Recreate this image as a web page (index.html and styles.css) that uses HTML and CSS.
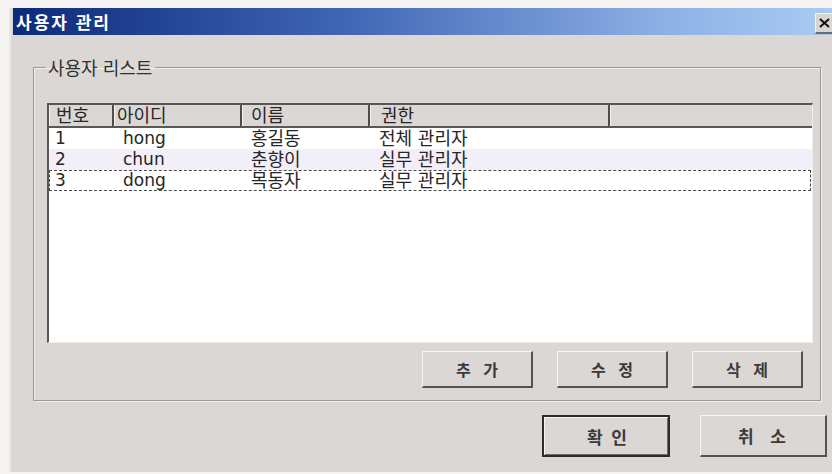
FILE: index.html
```html
<!DOCTYPE html>
<html lang="ko">
<head>
<meta charset="utf-8">
<title>사용자 관리</title>
<link rel="stylesheet" href="styles.css">
</head>
<body>
<div class="dialog">
  <div class="titlebar">
    <span class="title">사용자 관리</span>
    <button class="close" type="button" aria-label="닫기">
      <svg width="11" height="10" viewBox="0 0 11 10"><path d="M1 1 L10 9 M10 1 L1 9" stroke="#111" stroke-width="2"/></svg>
    </button>
  </div>
  <div class="body">
    <fieldset class="group">
      <legend>사용자 리스트</legend>
      <div class="listview">
        <div class="lv-row lv-head">
          <div class="c c1">번호</div>
          <div class="c c2">아이디</div>
          <div class="c c3">이름</div>
          <div class="c c4">권한</div>
          <div class="c c5"></div>
        </div>
        <div class="lv-row item">
          <div class="c c1">1</div>
          <div class="c c2">hong</div>
          <div class="c c3">홍길동</div>
          <div class="c c4">전체 관리자</div>
        </div>
        <div class="lv-row item alt">
          <div class="c c1">2</div>
          <div class="c c2">chun</div>
          <div class="c c3">춘향이</div>
          <div class="c c4">실무 관리자</div>
        </div>
        <div class="lv-row item focus">
          <div class="c c1">3</div>
          <div class="c c2">dong</div>
          <div class="c c3">목동자</div>
          <div class="c c4">실무 관리자</div>
        </div>
      </div>
      <div class="actions">
        <button class="btn" type="button">추 가</button>
        <button class="btn" type="button">수 정</button>
        <button class="btn" type="button">삭 제</button>
      </div>
    </fieldset>
    <div class="footer">
      <button class="btn btn-default" type="button">확 인</button>
      <button class="btn btn-cancel" type="button">취 소</button>
    </div>
  </div>
</div>
</body>
</html>
```

FILE: styles.css
```css
* { box-sizing: border-box; }

html, body {
  margin: 0;
  background: #f5f4f3;
}

body {
  padding: 8px 0 0 9px;
  font-family: "DejaVu Sans", "Noto Sans CJK KR", sans-serif;
  color: #262626;
}

.dialog {
  width: 823px;
  height: 464px;
  background: #dbd7d4;
  border-left: 2px solid #ebe9e7;
  padding-left: 2px;
}

/* caption bar */
.titlebar {
  height: 27px;
  background: linear-gradient(to right, #0d2a7a 0%, #3f65b4 40%, #8eb1e6 80%, #a9cbf2 100%);
  display: flex;
  align-items: center;
  justify-content: space-between;
}

.title {
  font-family: "Noto Sans CJK KR", sans-serif;
  font-size: 17px;
  font-weight: 700;
  color: #ffffff;
  padding-left: 3px;
  letter-spacing: 2px;
}

.close {
  width: 17px;
  height: 21px;
  margin-top: 4px;
  padding: 0;
  background: #d9d5d2;
  border: none;
  border-top: 1px solid #f4f2f0;
  border-left: 1px solid #f4f2f0;
  border-bottom: 2px solid #6e6b69;
  display: flex;
  align-items: center;
  justify-content: center;
}

.body {
  padding: 22px 0 0 20px;
}

/* group box */
.group {
  margin: 0;
  width: 788px;
  height: 344px;
  border: 1px solid #9c9896;
  box-shadow: inset 1px 1px 0 #f2f0ee, 1px 1px 0 #f2f0ee;
  padding: 0 7px 0 13px;
}

.group legend {
  font-family: "Noto Sans CJK KR", sans-serif;
  font-size: 18px;
  line-height: 20px;
  padding: 0 3px 0 2px;
  margin-left: -1px;
  color: #303030;
}

/* list view */
.listview {
  margin-top: 26px;
  height: 240px;
  background: #ffffff;
  border-top: 2px solid #5a5755;
  border-left: 2px solid #5a5755;
  border-bottom: 1px solid #f0eeec;
  border-right: 1px solid #f0eeec;
  font-size: 18px;
}

.lv-row {
  display: flex;
  height: 21px;
  line-height: 21px;
}

.lv-head {
  height: 23px;
  line-height: 22px;
  background: #dbd7d4;
  border-bottom: 2px solid #5a5755;
}

.c {
  padding-left: 9px;
  white-space: nowrap;
  font-family: "DejaVu Sans", "Noto Sans CJK KR", sans-serif;
}

.c1 { width: 65px; padding-left: 6px; }
.c2 { width: 128px; }
.c3 { width: 128px; }
.c4 { width: 240px; }
.c5 { flex: 1; }

.lv-head .c {
  border-right: 2px solid #4f4c4a;
  box-shadow: inset 1px 0 0 #f4f2f0;
  padding-left: 3px;
}

.lv-head .c1 { padding-left: 7px; }
.lv-head .c3 { padding-left: 9px; }
.lv-head .c4 { padding-left: 11px; }
.lv-head .c5 { border-right: none; }

.item .c { font-size: 17px; }
.item .c3, .item .c4 { font-size: 18px; }

.alt { background: #f3eff9; }

.focus {
  outline: 1px dashed #4a4a4a;
  outline-offset: -1px;
  margin-right: 1px;
}

/* buttons */
.actions {
  display: flex;
  justify-content: flex-end;
  gap: 24px;
  margin-top: 8px;
  padding-right: 10px;
}

.btn {
  width: 111px;
  height: 37px;
  background: #dbd7d4;
  border: none;
  border-top: 1px solid #f6f5f4;
  border-left: 1px solid #f6f5f4;
  border-right: 2px solid #555250;
  border-bottom: 2px solid #555250;
  font-family: "Noto Sans CJK KR", sans-serif;
  font-size: 16px;
  font-weight: 700;
  letter-spacing: 4px;
  color: #3a3a3a;
  padding: 0 0 0 4px;
}

.footer {
  display: flex;
  justify-content: flex-end;
  gap: 30px;
  padding: 14px 5px 0 0;
}

.btn-default {
  width: 128px;
  height: 42px;
  border: 2px solid #2e2c2b;
  box-shadow: inset 1px 1px 0 #f6f5f4, inset -1px -1px 0 #6e6b69;
  font-size: 17px;
  letter-spacing: 2px;
}

.btn-cancel {
  width: 127px;
  height: 42px;
  font-size: 17px;
  letter-spacing: 6px;
}
```
